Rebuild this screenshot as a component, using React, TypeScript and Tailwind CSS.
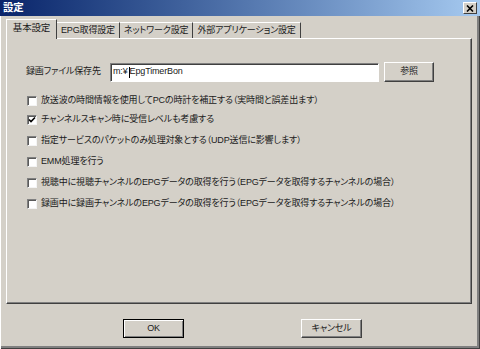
import React from "react";

const rows = [
  { text: "放送波の時間情報を使用してPCの時計を補正する（実時間と誤差出ます）", checked: false, mt: "mt-[13px]" },
  { text: "チャンネルスキャン時に受信レベルも考慮する", checked: true, mt: "mt-[8px]" },
  { text: "指定サービスのパケットのみ処理対象とする（UDP送信に影響します）", checked: false, mt: "mt-[10px]" },
  { text: "EMM処理を行う", checked: false, mt: "mt-[10px]" },
  { text: "視聴中に視聴チャンネルのEPGデータの取得を行う（EPGデータを取得するチャンネルの場合）", checked: false, mt: "mt-[10px]" },
  { text: "録画中に録画チャンネルのEPGデータの取得を行う（EPGデータを取得するチャンネルの場合）", checked: false, mt: "mt-[10px]" },
];

const tabs = ["EPG取得設定", "ネットワーク設定", "外部アプリケーション設定"];

function CheckBox({ checked }: { checked: boolean }) {
  return (
    <span className="flex h-[10px] w-[10px] shrink-0 items-center justify-center border border-t-[#808080] border-l-[#808080] border-r-[#f4f4f4] border-b-[#f4f4f4] bg-white shadow-[inset_1px_1px_#5a5a5a]">
      {checked && (
        <svg width="8" height="8" viewBox="0 0 8 8">
          <path d="M1 3.5 L3 5.5 L7 1.5" stroke="#000" strokeWidth="1.6" fill="none" />
        </svg>
      )}
    </span>
  );
}

function Button({ label, primary }: { label: string; primary?: boolean }) {
  return (
    <div
      className={
        "flex h-[19px] w-[61px] items-center justify-center bg-[#d4d0c8] " +
        (primary
          ? "border border-black shadow-[inset_1px_1px_#fff,inset_-1px_-1px_#808080]"
          : "border border-t-white border-l-white border-r-[#404040] border-b-[#404040] shadow-[inset_-1px_-1px_#808080]")
      }
    >
      {label}
    </div>
  );
}

export default function App() {
  return (
    <div className="flex h-[349px] w-[480px] flex-col bg-[#d4d0c8] text-[9px] tracking-[-0.15px] text-[#1a1a1a] [font-family:'Liberation_Sans','Noto_Sans_CJK_JP',sans-serif] [font-feature-settings:'palt'] shadow-[inset_1px_0_#fff,inset_-1px_-1px_#404040,inset_-3px_-3px_#808080]">
      {/* title bar */}
      <div className="flex h-[16px] items-center justify-between bg-linear-to-r from-[#0a246a] to-[#a6caf0] pl-[3px]">
        <span className="text-[10.5px] font-bold text-white">設定</span>
        <div className="mr-[3px] flex h-[12px] w-[14px] items-center justify-center border border-t-white border-l-white border-r-[#404040] border-b-[#404040] bg-[#d4d0c8]">
          <svg width="8" height="7" viewBox="0 0 8 7">
            <path d="M1 0.5 L7 6.5 M7 0.5 L1 6.5" stroke="#000" strokeWidth="1.6" />
          </svg>
        </div>
      </div>

      {/* tabs */}
      <div className="relative z-10 mt-[3px] flex h-[19px] items-end pl-[6px]">
        <div className="-mb-px flex h-[20px] w-[51px] items-center justify-center border-t border-l border-t-white border-l-white border-r border-r-[#404040] bg-[#d4d0c8] pb-[2px] text-[9.5px]">
          基本設定
        </div>
        {tabs.map((t) => (
          <div
            key={t}
            className="flex h-[16px] items-center border-t border-t-white border-r border-r-[#404040] px-[4px]"
          >
            {t}
          </div>
        ))}
      </div>

      {/* panel */}
      <div className="ml-[6px] flex h-[266px] w-[466px] flex-col border border-t-white border-l-white border-r-[#404040] border-b-[#404040] shadow-[inset_-1px_-1px_#808080] pl-[19px] pt-[23px]">
        <div className="flex items-center">
          <span className="w-[84px]">録画ファイル保存先</span>
          <div className="flex h-[19px] w-[269px] items-center border border-t-[#808080] border-l-[#808080] border-r-white border-b-white bg-white pl-[2px] shadow-[inset_1px_1px_#404040]">
            <span>m:¥</span>
            <span className="ml-[1px] h-[11px] w-px bg-black" />
            <span>EpgTimerBon</span>
          </div>
          <div className="ml-[5px]">
            <div className="flex h-[20px] w-[50px] items-center justify-center border border-t-white border-l-white border-r-[#404040] border-b-[#404040] shadow-[inset_-1px_-1px_#808080]">
              参照
            </div>
          </div>
        </div>

        {rows.map((r) => (
          <div key={r.text} className={"flex h-[11px] items-center gap-[4px] pl-[1px] " + r.mt}>
            <CheckBox checked={r.checked} />
            <span className="whitespace-nowrap">{r.text}</span>
          </div>
        ))}
      </div>

      {/* buttons */}
      <div className="mt-[15px] flex justify-center gap-[117px] pl-[5px]">
        <Button label="OK" primary />
        <Button label="キャンセル" />
      </div>
    </div>
  );
}
